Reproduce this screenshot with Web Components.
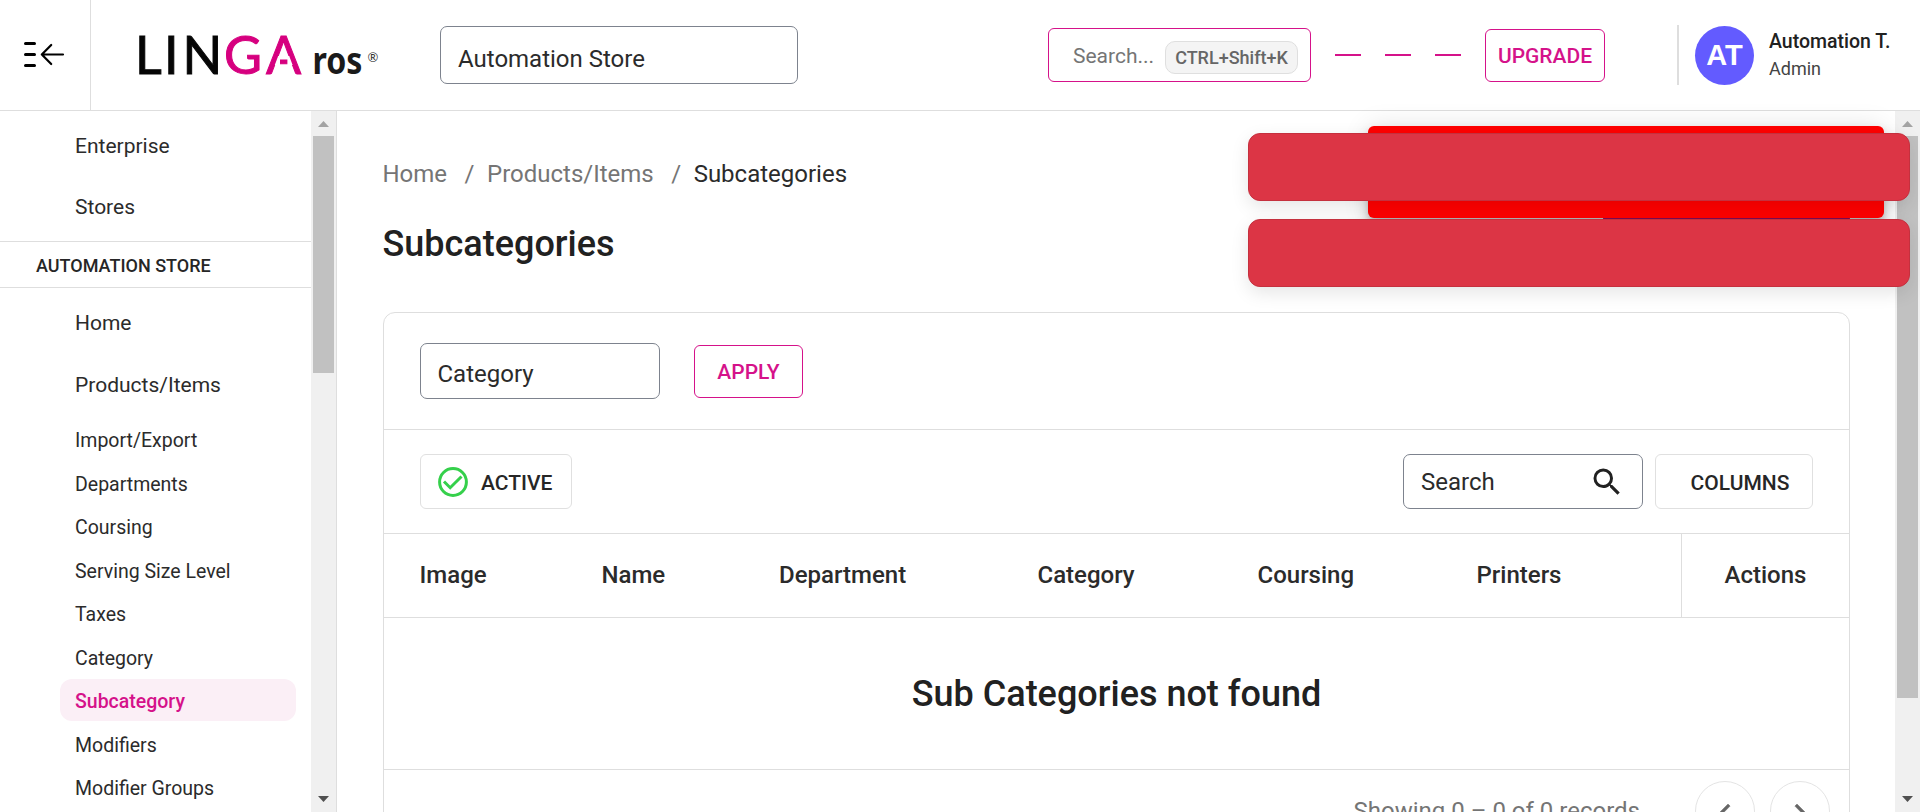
<!DOCTYPE html>
<html lang="en">
<head>
<meta charset="utf-8">
<title>Subcategories</title>
<style>
html,body{margin:0;height:100%;overflow:hidden;background:#fff}
body{font-family:Roboto,sans-serif;color:#212121;--pink:#d5128a;--line:#dedede;--field:#7d838e}
</style>
</head>
<body>
<linga-app></linga-app>
<script>
const define = (name, html) => customElements.define(name, class extends HTMLElement {
  constructor() {
    super();
    const t = document.createElement('template');
    t.innerHTML = html;
    this.attachShadow({ mode: 'open' }).append(t.content.cloneNode(true));
  }
});

define('linga-menu-toggle', `
<style>:host{display:flex;box-sizing:border-box;width:91px;height:110px;border-right:1px solid var(--line);align-items:center;padding-left:22px}</style>
<svg width="44" height="32" viewBox="0 0 44 32" fill="none" stroke="#000" stroke-linecap="round" stroke-linejoin="round">
<path d="M3.5 4.5h9M3.5 15.5h9M3.5 26.500h9" stroke-width="3"/><path d="M41 15.500H19.800M29.200 6L19.800 15.500l9.400 9.500" stroke-width="2.200"/></svg>`);

define('linga-logo', `
<style>:host{display:block;width:250px;height:70px}svg{display:block;overflow:visible}</style>
<svg width="250" height="70" viewBox="0 0 250 70">
<g font-family="Lato, sans-serif" font-size="52" stroke-width="1">
<text x="0 29 47.5" y="53.5" fill="#050505" stroke="#050505">LIN</text>
<text x="89 131" y="53.5" fill="#d6007f" stroke="#d6007f">GA</text></g>
<path d="M139.800 45L143.200 36H145v9zM157.600 45L154.200 36H152.400v9z" fill="#fff"/>
<text x="177.500" y="53.500" font-family="Noto Sans, sans-serif" font-weight="700" font-size="37" fill="#1a1a1a" textLength="50" lengthAdjust="spacingAndGlyphs">ros</text>
<text x="232.500" y="41.500" font-family="Lato, sans-serif" font-size="13" fill="#333">®</text>
</svg>`);

define('linga-field', `
<style>:host{display:flex;box-sizing:border-box;align-items:center;border:1px solid var(--field);border-radius:7px;padding:var(--shift,0) 17px 0 17px;font-size:24px;color:#2b2b2b;background:#fff;justify-content:space-between}</style>
<slot></slot>`);

define('linga-button', `
<style>:host{display:flex;box-sizing:border-box;align-items:center;justify-content:center;border:1px solid var(--pink);border-radius:6px;font-size:21px;font-weight:500;color:var(--pink);white-space:nowrap}
:host([plain]){border-color:#e0e0e0;color:#262626}</style>
<slot></slot>`);

define('linga-quick-search', `
<style>:host{display:flex;box-sizing:border-box;width:263px;height:54px;border:1px solid var(--pink);border-radius:6px;align-items:center;justify-content:space-between;padding:1px 12px 0 24px;font-size:21px;color:#757575}
kbd{box-sizing:border-box;width:133px;height:33px;margin-top:4px;border:1px solid #dfdfdf;border-radius:10px;background:#f4f4f4;font:500 18px/31px Roboto,sans-serif;text-align:center;color:#666}</style>
<span>Search...</span><kbd>CTRL+Shift+K</kbd>`);

define('linga-user', `
<style>:host{display:flex;align-items:center}
i{width:2px;height:60px;background:#dedede;margin-right:16px}
b{width:59px;height:59px;border-radius:50%;background:#635bff;color:#fff;font:700 29px/59px "Liberation Sans",sans-serif;text-align:center;margin-right:15px}
p{margin:0;font-size:19.5px;font-weight:500;line-height:27px}p+p{font-size:18px;font-weight:400;color:#444}</style>
<i></i><b>AT</b><div><p>Automation T.</p><p>Admin</p></div>`);

define('linga-header', `
<style>:host{display:flex;box-sizing:border-box;height:111px;border-bottom:1px solid var(--line);align-items:center}
linga-logo{margin-left:44px}
linga-field{width:358px;height:58px;margin-left:55px;--shift:8px}
linga-quick-search{margin-left:250px}
.dashes{display:flex;gap:24px;margin:0 24px}.dashes i{width:26px;height:2px;background:var(--pink)}
linga-button{width:120px;height:53px;margin-top:1px}
linga-user{margin-left:72px}</style>
<linga-menu-toggle></linga-menu-toggle><linga-logo></linga-logo><linga-field>Automation Store</linga-field>
<linga-quick-search></linga-quick-search><div class="dashes"><i></i><i></i><i></i></div>
<linga-button>UPGRADE</linga-button><linga-user></linga-user>`);

define('linga-scrollbar', `
<style>:host{display:flex;flex-direction:column;flex:none;box-sizing:border-box;width:25px;background:#f0f0f0;padding:0 2px}
svg{display:block;height:25px;width:21px;flex:none}
div{height:var(--thumb);background:#c1c1c1;margin-bottom:auto}</style>
<svg viewBox="0 0 21 25"><path d="M5 16l5.500-6 5.500 6z" fill="#a3a3a3"/></svg><div></div>
<svg viewBox="0 0 21 25"><path d="M5 9l5.500 6 5.500-6z" fill="#505050"/></svg>`);

define('linga-nav-item', `
<style>:host{display:block;box-sizing:border-box;margin:0 15px 0 60px;padding-left:15px;height:var(--row);font-size:21px;line-height:var(--row);color:#2b2b2b;white-space:nowrap}
:host([sub]){height:42px;line-height:45px;margin-bottom:1.5px;font-size:19.5px;border-radius:12px;padding-left:15px}
:host([active]){background:#fbeff6;color:var(--pink);font-weight:500}</style><slot></slot>`);

define('linga-sidebar', `
<style>:host{display:flex;box-sizing:border-box;width:337px;flex:none;border-right:1px solid var(--line);overflow:hidden}
nav{flex:1;overflow:hidden}
.top{--row:61px;padding:5px 0 3px}
.store{border:solid var(--line);border-width:1px 0;height:44px;padding:1px 0 0 36px;font-size:18px;font-weight:500;line-height:45px;color:#262626}
.main{--row:62px;padding:4px 0 2px}
linga-scrollbar{--thumb:237px}</style>
<nav><div class="top"><linga-nav-item>Enterprise</linga-nav-item><linga-nav-item>Stores</linga-nav-item></div>
<div class="store">AUTOMATION STORE</div>
<div class="main"><linga-nav-item>Home</linga-nav-item><linga-nav-item>Products/Items</linga-nav-item></div>
<linga-nav-item sub>Import/Export</linga-nav-item><linga-nav-item sub>Departments</linga-nav-item><linga-nav-item sub>Coursing</linga-nav-item><linga-nav-item sub>Serving Size Level</linga-nav-item><linga-nav-item sub>Taxes</linga-nav-item><linga-nav-item sub>Category</linga-nav-item><linga-nav-item sub active>Subcategory</linga-nav-item><linga-nav-item sub>Modifiers</linga-nav-item><linga-nav-item sub>Modifier Groups</linga-nav-item></nav>
<linga-scrollbar></linga-scrollbar>`);

define('linga-heading', `
<style>:host{display:block;height:201px;box-sizing:border-box;padding-top:49px}
nav{display:flex;font-size:24px;line-height:28px;color:#757575;white-space:pre;margin-left:-.5px}
nav i{font-style:normal;margin:0 12.5px 0 17.5px}nav b{font-weight:400;color:#2b2b2b}
div{display:flex;justify-content:space-between;align-items:flex-start;margin-top:30px}
h1{margin:5px 0 0 -.5px;font-size:36px;line-height:42px;font-weight:500}
span{width:247px;height:54px;margin-top:-5px;border-radius:6px;background:#b0107a}</style>
<nav>Home<i>/</i>Products/Items<i>/</i><b>Subcategories</b></nav>
<div><h1>Subcategories</h1><span></span></div>`);

define('linga-table-head', `
<style>:host{display:grid;grid-template-columns:182px 177.5px 258.5px 220px 219px 1fr 168px;height:83px;border-bottom:1px solid var(--line);padding-left:35.5px;font-size:24px;font-weight:500;line-height:83px;color:#2b2b2b}
span:last-child{text-align:center;border-left:1px solid var(--line)}</style>
<span>Image</span><span>Name</span><span>Department</span><span>Category</span><span>Coursing</span><span>Printers</span><span>Actions</span>`);

define('linga-pager', `
<style>:host{display:flex;justify-content:flex-end;align-items:flex-start;gap:15px;padding:11px 19px 0 0;font-size:24px;color:#757575}
p{margin:14px 40px 0 0;line-height:32px}
i{box-sizing:border-box;width:60px;height:60px;padding-top:3px;border:1px solid #e4e4e4;border-radius:50%;display:flex;align-items:center;justify-content:center}</style>
<p>Showing 0 – 0 of 0 records</p>
<i><svg width="36" height="36" viewBox="0 0 24 24" fill="#666" stroke="#666" stroke-width=".3"><path d="M15.410 7.410L14 6l-6 6 6 6 1.410-1.410L10.830 12z"/></svg></i>
<i><svg width="36" height="36" viewBox="0 0 24 24" fill="#666" stroke="#666" stroke-width=".3"><path d="M10 6L8.590 7.410 13.170 12l-4.580 4.590L10 18l6-6z"/></svg></i>`);

define('linga-card', `
<style>:host{display:block;box-sizing:border-box;height:560px;border:1px solid var(--line);border-radius:12px}
.bar{display:flex;box-sizing:border-box;border-bottom:1px solid var(--line);padding:0 36px;align-items:center}
.filter{height:117px}.filter linga-field{width:240px;height:56px;--shift:5px;padding-left:16.5px}.filter linga-button{width:109px;height:53px;margin:0 0 0 34px;padding-top:2px}
.tools{height:104px}.tools linga-button{height:55px;padding-top:2px}
.active{width:152px;justify-content:flex-start;padding-left:17px}.active svg{margin:-2px 13px 0 0}
.tools linga-field{width:240px;height:55px;margin:0 12px 0 auto}
.columns{width:158px;padding-left:12px}
.empty{height:151px;box-sizing:border-box;height:152px;border-bottom:1px solid var(--line);text-align:center;font-size:36px;font-weight:500;line-height:153px}</style>
<div class="bar filter"><linga-field>Category</linga-field><linga-button>APPLY</linga-button></div>
<div class="bar tools"><linga-button plain class="active"><svg width="30" height="30" viewBox="0 0 30 30" fill="none" stroke="#35d04b" stroke-width="3"><circle cx="15" cy="15" r="13.400"/><path d="M6 14.500l6.200 6.200L23.500 9.500"/></svg>ACTIVE</linga-button>
<linga-field>Search<svg width="36" height="36" viewBox="0 0 24 24" fill="#212121"><path d="M15.500 14h-.790l-.280-.270A6.471 6.471 0 0 0 16 9.500 6.500 6.500 0 1 0 9.500 16c1.610 0 3.090-.590 4.230-1.570l.270.280v.790l5 4.990L20.490 19l-4.990-5zm-6 0C7.010 14 5 11.990 5 9.500S7.010 5 9.500 5 14 7.010 14 9.500 11.990 14 9.500 14z"/></svg></linga-field>
<linga-button plain class="columns">COLUMNS</linga-button></div>
<linga-table-head></linga-table-head>
<div class="empty">Sub Categories not found</div>
<linga-pager></linga-pager>`);

define('linga-toasts', `
<style>:host{position:absolute;inset:0;pointer-events:none}
div{position:absolute;box-sizing:border-box}
.snack{left:1368px;top:126px;width:516px;height:92px;border-radius:6px;background:#f00;box-shadow:0 4.5px 7.5px -1.5px rgba(0,0,0,.2),0 9px 15px rgba(0,0,0,.14),0 1.5px 27px rgba(0,0,0,.12)}
.toast{left:1248px;top:133px;width:662px;height:68px;border:1px solid #c5303e;border-radius:12px;background:#dc3545;box-shadow:0 6px 18px rgba(0,0,0,.1)}
.second{top:219px}</style>
<div class="snack"></div><div class="toast"></div><div class="toast second"></div>`);

define('linga-app', `
<style>:host{display:flex;flex-direction:column;height:812px;width:1920px;overflow:hidden;position:relative}
.body{display:flex;flex:1;min-height:0}
main{flex:1;padding:0 45px 0 46px;overflow:hidden}
.page{--thumb:562px}</style>
<linga-header></linga-header>
<div class="body"><linga-sidebar></linga-sidebar><main><linga-heading></linga-heading><linga-card></linga-card></main><linga-scrollbar class="page"></linga-scrollbar></div>
<linga-toasts></linga-toasts>`);
</script>
</body>
</html>
